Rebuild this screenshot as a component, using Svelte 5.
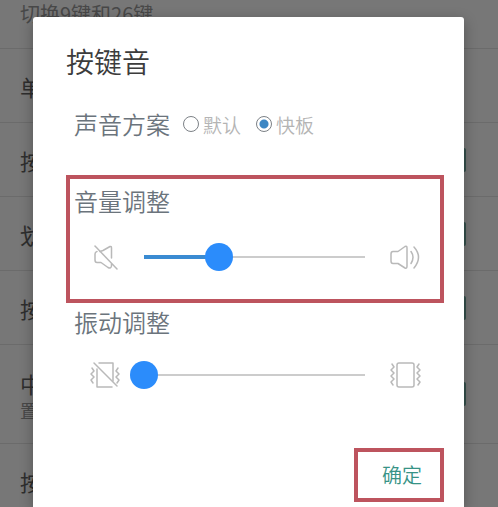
<script>
	let rows = [
		{ label: '单', size: 'normal', toggle: false },
		{ label: '按', size: 'normal', toggle: true },
		{ label: '划', size: 'normal', toggle: true },
		{ label: '按', size: 'normal', toggle: true },
		{ label: '中', note: '置', size: 'tall', toggle: true },
		{ label: '按', size: 'normal', toggle: false }
	];

	let scheme = 'allegro';
	let volume = 34;
	let vibration = 0;
</script>

<div class="screen">
	<div class="settings" aria-hidden="true">
		<div class="row first">切换9键和26键</div>
		{#each rows as row}
			<div class="row {row.size}">
				<div>
					<div class="name">{row.label}</div>
					{#if row.note}
						<div class="note">{row.note}</div>
					{/if}
				</div>
				{#if row.toggle}
					<span class="toggle"></span>
				{/if}
			</div>
		{/each}
	</div>

	<div class="dialog" role="dialog" aria-labelledby="title">
		<h1 id="title">按键音</h1>

		<fieldset class="scheme">
			<legend>声音方案</legend>
			<label><input type="radio" value="default" bind:group={scheme} />默认</label>
			<label><input type="radio" value="allegro" bind:group={scheme} />快板</label>
		</fieldset>

		<section class="marked volume">
			<label class="heading" for="volume">音量调整</label>
			<div class="control">
				<svg viewBox="0 0 32 32">
					<path d="M12 10.500L15 9.500L22 5.500Q23.500 5 23.500 7V17M9 10.500Q7 11 7 13V19Q7 21.500 9 21.500H13L20 26.500Q23 28 23.500 25V23" />
					<path d="M7 5L29 28" />
				</svg>
				<input id="volume" type="range" min="0" max="100" bind:value={volume} style:--fill={volume / 100} />
				<svg viewBox="0 0 32 32">
					<path d="M4 10.500H9L16 5.500Q18 4.500 18 7V25Q18 28 16 27L9 22.500H4Q2 22.500 2 20V13Q2 10.500 4 10.500Z" />
					<path d="M22 10.500Q26 16 22 22.500M25 6Q34 16 25 27" />
				</svg>
			</div>
		</section>

		<section class="vibration">
			<label class="heading" for="vibration">振动调整</label>
			<div class="control">
				<svg viewBox="0 0 32 32">
					<path d="M11 4H25V22M9 10V28H24" />
					<path d="M6 4L29 27" />
					<path d="M4 9L6 12L3 15L6 18L3 21L5 24M30 9L28 12L31 15L28 18L31 21L29 24" />
				</svg>
				<input id="vibration" type="range" min="0" max="100" bind:value={vibration} style:--fill={vibration / 100} />
				<svg viewBox="0 0 32 32">
					<rect x="8" y="4" width="17" height="24" rx="2" />
					<path d="M3 5L5 8L2 11L5 14L2 17L5 20L2 23L4 26M30 5L28 8L31 11L28 14L31 17L28 20L31 23L29 26" />
				</svg>
			</div>
		</section>

		<button class="marked" type="button">确定</button>
	</div>
</div>

<style>
	:global(body) {
		background: #777;
		font-family: "Noto Sans CJK SC", sans-serif;
	}

	.screen {
		position: relative;
		min-height: 100vh;
		overflow: hidden;
	}

	.settings {
		position: absolute;
		inset: 0;
		overflow: hidden;
		color: #2e2e2e;
	}

	.row {
		display: flex;
		align-items: center;
		justify-content: space-between;
		box-sizing: border-box;
		height: 74px;
		padding: 0 32px 0 20px;
		border-bottom: 1px solid #6b6b6b;
		font-size: 22px;
		line-height: 32px;
	}

	.row.first {
		height: 49px;
		align-items: flex-start;
		font-size: 20px;
		line-height: 28px;
		color: #484848;
	}

	.row.tall {
		height: 99px;
	}

	.note {
		font-size: 18px;
		line-height: 22px;
		color: #484848;
	}

	.toggle {
		width: 44px;
		height: 24px;
		border-radius: 2px;
		background: #35504c;
	}

	.dialog {
		position: absolute;
		inset: 17px 34px 0 33px;
		display: flex;
		flex-direction: column;
		padding: 24px 20px 0 33px;
		border-radius: 3px 3px 0 0;
		background: #fff;
		box-shadow: 0 4px 14px rgba(0, 0, 0, 0.3);
	}

	h1 {
		margin: 0;
		font-size: 28px;
		font-weight: 350;
		line-height: 40px;
		color: #3c3c3c;
	}

	.scheme {
		display: flex;
		align-items: center;
		margin: 27px 0 0;
		padding: 0 8px;
		border: 0;
	}

	legend {
		float: left;
		margin-right: 13px;
		padding: 0;
	}

	legend,
	.heading {
		font-size: 24px;
		font-weight: 350;
		line-height: 32px;
		color: #6b747c;
	}

	.scheme label {
		display: flex;
		align-items: center;
		gap: 4px;
		margin-right: 15px;
		font-size: 19px;
		font-weight: 350;
		color: #b4b4b4;
	}

	input[type="radio"] {
		appearance: none;
		box-sizing: border-box;
		width: 16px;
		height: 16px;
		margin: 0;
		border: 1px solid #7c8186;
		border-radius: 50%;
	}

	input[type="radio"]:checked {
		background: radial-gradient(circle, #3d87c4 4px, transparent 5px);
	}

	section {
		padding: 0 8px;
	}

	.marked {
		border: 4px solid #bd545e;
	}

	.volume {
		margin-top: 35px;
		padding: 6px 4px 22px;
	}

	.vibration {
		margin-top: 3px;
	}

	.heading {
		display: block;
	}

	.control {
		display: flex;
		align-items: center;
		gap: 10px;
		height: 40px;
		margin: 20px 15px 0 14px;
	}

	.vibration .control {
		margin-top: 17px;
	}

	svg {
		flex: none;
		width: 32px;
		height: 32px;
		fill: none;
		stroke: #b9b9b9;
		stroke-width: 1.5;
		stroke-linejoin: round;
		stroke-linecap: round;
	}

	input[type="range"] {
		flex: 1;
		appearance: none;
		min-width: 0;
		height: 28px;
		margin: 0;
		background:
			linear-gradient(#3a8bd2, #3a8bd2) 14px center / calc((100% - 28px) * var(--fill)) 4px no-repeat,
			linear-gradient(#ccc, #ccc) 14px center / calc(100% - 28px) 2px no-repeat;
	}

	input[type="range"]::-webkit-slider-thumb {
		appearance: none;
		width: 28px;
		height: 28px;
		border-radius: 50%;
		background: #2b8cfb;
	}

	button {
		align-self: flex-end;
		margin-top: 53px;
		padding: 8px 18px 8px 24px;
		background: #fff;
		font-family: inherit;
		font-size: 20px;
		font-weight: 350;
		line-height: 30px;
		color: #379386;
	}
</style>
